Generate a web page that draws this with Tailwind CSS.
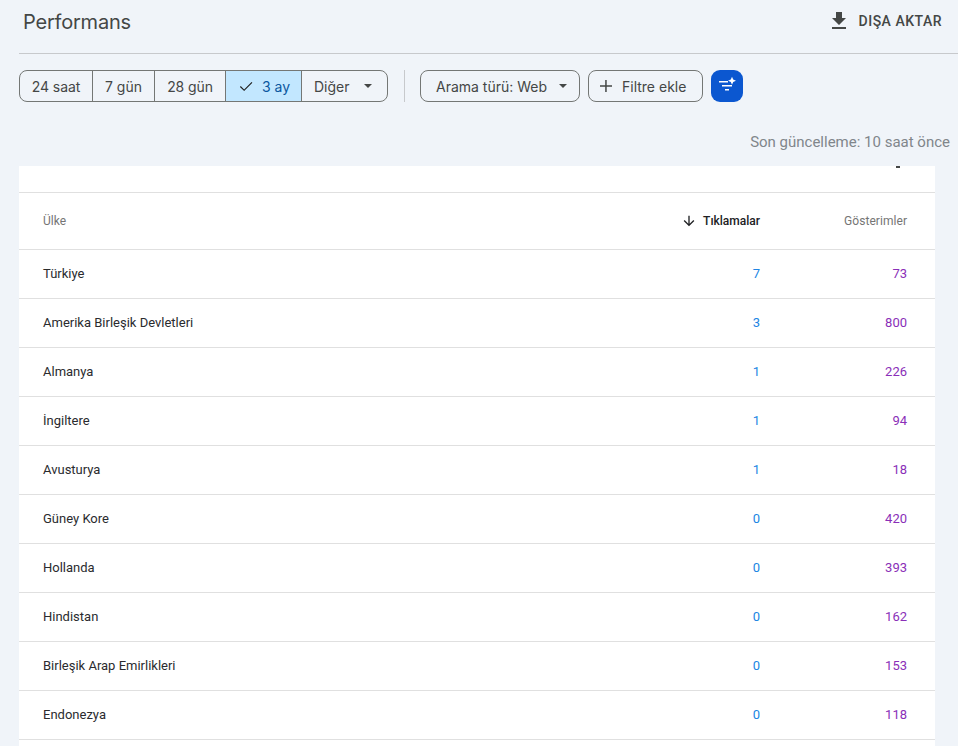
<!DOCTYPE html>
<html lang="tr">
<head>
<meta charset="utf-8">
<script src="https://cdn.jsdelivr.net/npm/@tailwindcss/browser@4"></script>
</head>
<body class="bg-[#f0f4f9] font-['Roboto',sans-serif] overflow-hidden">
<div class="w-[958px] h-[746px] overflow-hidden pl-[19px]">
  <header class="h-[54px] border-b border-[#c7c9cc] flex items-start justify-between pt-[8px]">
    <h1 class="ml-[4px] text-[20px] leading-[28px] font-normal text-[#444746] font-['Inter',sans-serif] tracking-[-0.2px]">Performans</h1>
    <button class="flex items-center gap-[8px] pr-[16px] h-[26px] text-[14px] font-medium tracking-[0.5px] text-[#444746]">
      <svg width="24" height="24" viewBox="0 0 24 24" fill="#444746"><path d="M19 9h-4V3H9v6H5l7 7 7-7zM5 18v2h14v-2H5z"/></svg>
      DIŞA AKTAR
    </button>
  </header>

  <div class="mt-[16px] flex items-center h-[32px] text-[14px] text-[#444746] font-['Inter',sans-serif]">
    <div class="flex h-[32px] w-[369px] border border-[#747775] rounded-[8px] overflow-hidden">
      <div class="w-[73px] flex items-center justify-center border-r border-[#747775] tracking-[-0.1px]">24 saat</div>
      <div class="w-[62px] flex items-center justify-center border-r border-[#747775]">7 gün</div>
      <div class="w-[71px] flex items-center justify-center border-r border-[#747775] tracking-[-0.1px]">28 gün</div>
      <div class="w-[76px] flex items-center pl-[11px] gap-[7px] border-r border-[#747775] bg-[#c2e7ff] text-[#0b57a0]">
        <svg width="18" height="18" viewBox="0 0 24 24" fill="#1f1f1f"><path d="M9.5 16.6 5 12.1l-1.1 1.1 5.6 5.6 11-11-1.1-1.1z"/></svg>
        <span>3 ay</span>
      </div>
      <div class="flex-1 flex items-center pl-[12px] gap-[14px]">
        <span>Diğer</span>
        <svg width="8" height="4" viewBox="0 0 10 5" fill="#444746"><path d="M0 0h10L5 5z"/></svg>
      </div>
    </div>
    <div class="w-px h-[32px] bg-[#c7c9cc] ml-[16px]"></div>
    <div class="ml-[15px] w-[160px] h-[32px] border border-[#747775] rounded-[8px] flex items-center pl-[15px] gap-[12px]">
      <span>Arama türü: Web</span>
      <svg width="8" height="4" viewBox="0 0 10 5" fill="#444746"><path d="M0 0h10L5 5z"/></svg>
    </div>
    <div class="ml-[8px] w-[115px] h-[32px] border border-[#747775] rounded-[8px] flex items-center pl-[10px] gap-[9px]">
      <svg width="14" height="14" viewBox="0 0 14 14" fill="#444746"><path d="M6.2 1h1.5v5.2H13v1.5H7.7V13H6.2V7.7H1V6.2h5.2z"/></svg>
      <span>Filtre ekle</span>
    </div>
    <div class="ml-[8px] w-[32px] h-[32px] rounded-[9px] bg-[#0b57d0] flex items-center justify-center">
      <svg width="20" height="20" viewBox="0 0 20 20" fill="#fff">
        <path d="M2 5h9v1.6H2zM5 9h10v1.6H5zM8 13h4v1.6H8z"/>
        <path d="M15 .8l1.2 2.8 2.8 1.2-2.8 1.2L15 8.8l-1.2-2.8L11 4.8l2.8-1.2z"/>
      </svg>
    </div>
  </div>

  <p class="mt-[30px] h-[20px] pr-[8px] text-right text-[15px] leading-[20px] text-[#80868b]">Son güncelleme: 10 saat önce</p>

  <main class="mt-[14px] w-[916px] bg-white text-[13px] text-[#2a2b2e] overflow-hidden relative">
    <div class="h-[27px] border-b border-[#e0e0e0] relative">
      <div class="absolute right-[35px] top-0 w-[4px] h-[2px] bg-[#444746]"></div>
    </div>
    <div class="h-[57px] border-b border-[#e0e0e0] grid grid-cols-[1fr_130px_147px] items-center pl-[24px] pr-[28px] text-[12px] text-[#757575]">
      <span>Ülke</span>
      <span class="flex items-center justify-end gap-[6px] font-medium text-[#202124]">
        <svg width="16" height="16" viewBox="0 0 24 24" fill="#202124"><path d="M20 12l-1.41-1.41L13 16.17V4h-2v12.17l-5.58-5.59L4 12l8 8 8-8z"/></svg>
        Tıklamalar
      </span>
      <span class="text-right tracking-[0.05px]">Gösterimler</span>
    </div>

    <div class="h-[49px] border-b border-[#e0e0e0] grid grid-cols-[1fr_130px_147px] items-center pl-[24px] pr-[28px]"><span>Türkiye</span><span class="text-right text-[#2085e3]">7</span><span class="text-right text-[#8a2fb8]">73</span></div>
    <div class="h-[49px] border-b border-[#e0e0e0] grid grid-cols-[1fr_130px_147px] items-center pl-[24px] pr-[28px]"><span>Amerika Birleşik Devletleri</span><span class="text-right text-[#2085e3]">3</span><span class="text-right text-[#8a2fb8]">800</span></div>
    <div class="h-[49px] border-b border-[#e0e0e0] grid grid-cols-[1fr_130px_147px] items-center pl-[24px] pr-[28px]"><span>Almanya</span><span class="text-right text-[#2085e3]">1</span><span class="text-right text-[#8a2fb8]">226</span></div>
    <div class="h-[49px] border-b border-[#e0e0e0] grid grid-cols-[1fr_130px_147px] items-center pl-[24px] pr-[28px]"><span>İngiltere</span><span class="text-right text-[#2085e3]">1</span><span class="text-right text-[#8a2fb8]">94</span></div>
    <div class="h-[49px] border-b border-[#e0e0e0] grid grid-cols-[1fr_130px_147px] items-center pl-[24px] pr-[28px]"><span>Avusturya</span><span class="text-right text-[#2085e3]">1</span><span class="text-right text-[#8a2fb8]">18</span></div>
    <div class="h-[49px] border-b border-[#e0e0e0] grid grid-cols-[1fr_130px_147px] items-center pl-[24px] pr-[28px]"><span>Güney Kore</span><span class="text-right text-[#2085e3]">0</span><span class="text-right text-[#8a2fb8]">420</span></div>
    <div class="h-[49px] border-b border-[#e0e0e0] grid grid-cols-[1fr_130px_147px] items-center pl-[24px] pr-[28px]"><span>Hollanda</span><span class="text-right text-[#2085e3]">0</span><span class="text-right text-[#8a2fb8]">393</span></div>
    <div class="h-[49px] border-b border-[#e0e0e0] grid grid-cols-[1fr_130px_147px] items-center pl-[24px] pr-[28px]"><span>Hindistan</span><span class="text-right text-[#2085e3]">0</span><span class="text-right text-[#8a2fb8]">162</span></div>
    <div class="h-[49px] border-b border-[#e0e0e0] grid grid-cols-[1fr_130px_147px] items-center pl-[24px] pr-[28px]"><span>Birleşik Arap Emirlikleri</span><span class="text-right text-[#2085e3]">0</span><span class="text-right text-[#8a2fb8]">153</span></div>
    <div class="h-[49px] border-b border-[#e0e0e0] grid grid-cols-[1fr_130px_147px] items-center pl-[24px] pr-[28px]"><span>Endonezya</span><span class="text-right text-[#2085e3]">0</span><span class="text-right text-[#8a2fb8]">118</span></div>
    <div class="h-[49px]"></div>
  </main>
</div>
</body>
</html>
